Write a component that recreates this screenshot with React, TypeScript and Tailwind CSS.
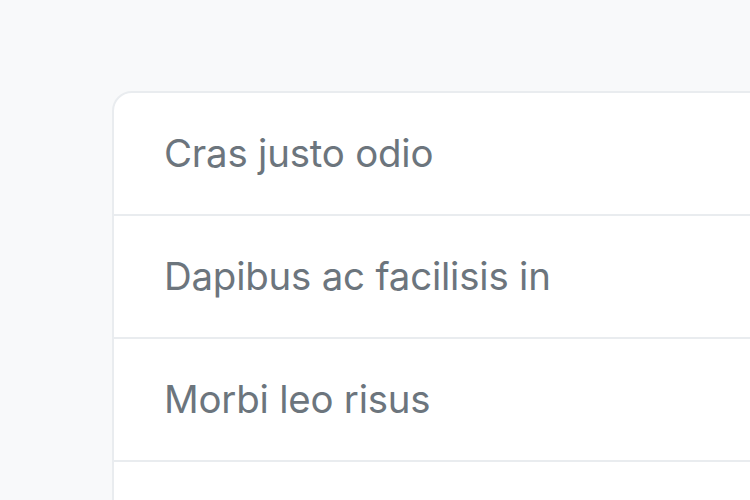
import React from 'react';

const items = ['Cras justo odio', 'Dapibus ac facilisis in', 'Morbi leo risus', ''];

export default function App() {
  return (
    <div className="h-[500px] w-[750px] overflow-hidden bg-[#f8f9fa] pl-[112px] pt-[91px]" style={{ fontFamily: 'Inter, "Open Sans", sans-serif' }}>
      <ul className="w-[760px] rounded-tl-[20px] border-2 border-[#e9ecef] bg-white">
        {items.map((item, i) => (
          <li
            key={i}
            className={`flex items-center pl-[50px] text-[38.4px] tracking-[-0.2px] text-[#6c757d] ${i > 0 ? 'h-[123px] border-t-2 border-[#e9ecef]' : 'h-[121px]'}`}
          >
            {item}
          </li>
        ))}
      </ul>
    </div>
  );
}
